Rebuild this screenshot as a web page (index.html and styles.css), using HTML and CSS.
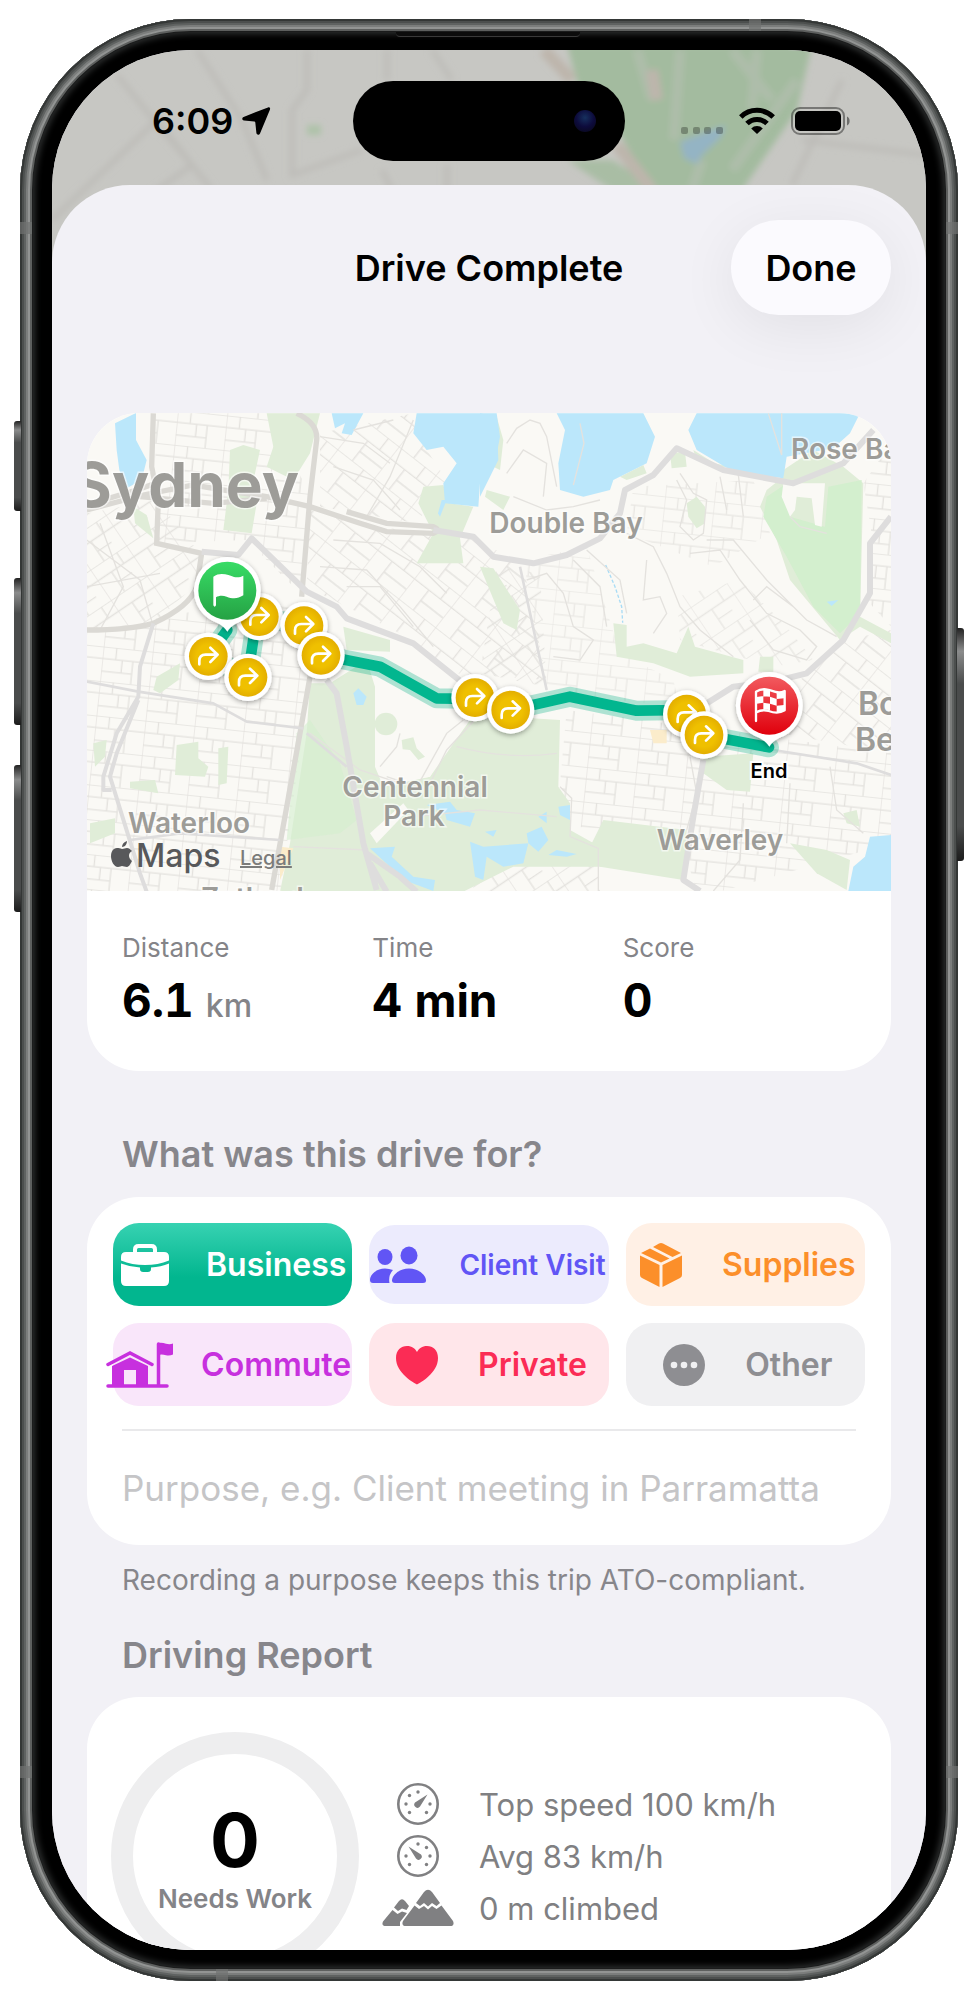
FILE: index.html
```html
<!DOCTYPE html>
<html lang="en">
<head>
	<meta charset="utf-8">
	<meta name="viewport" content="width=device-width, initial-scale=1">
	<title>Drive Complete</title>
	<link rel="stylesheet" href="styles.css">
</head>
<body>
<div class="phone">
	<!-- hardware details -->
	<span class="key key-action"></span>
	<span class="key key-up"></span>
	<span class="key key-down"></span>
	<span class="key key-power"></span>
	<span class="band band-left"></span>
	<span class="band band-right"></span>
	<span class="band band-left band-low"></span>
	<span class="band band-right band-low"></span>
	<span class="band band-top"></span>
	<span class="band band-bottom"></span>
	<span class="speaker"></span>

	<div class="screen">
		<!-- dimmed map behind the sheet -->
		<svg class="backdrop" viewBox="0 0 874 240" preserveAspectRatio="none" aria-hidden="true">
			<defs>
				<filter id="soft"><feGaussianBlur stdDeviation="3"/></filter>
			</defs>
			<rect width="874" height="240" fill="#c7c7c3"/>
			<g filter="url(#soft)">
				<path d="M515 -5H760L745 60L690 140H600L560 70L530 50Z" fill="#a3bb9f"/>
				<path d="M560 110L610 140H560L515 110Z" fill="#a9bda4"/>
				<path d="M585 0L600 50M628 0L622 90M705 0L700 60M650 110L640 140M745 30L680 120M680 0L720 50" stroke="#aebdaa" stroke-width="10" fill="none"/>
				<path d="M492 0L520 30M565 95L600 140M600 20L605 50" stroke="#bdb5ac" stroke-width="12" fill="none"/>
				<path d="M628 92L674 75L668 88L650 105L645 114L632 108Z" fill="#94b4c4"/>
				<path d="M145 0L190 70L215 130M65 25L110 80L140 115L160 140M140 115L0 215M255 0V40L240 60V125L310 100M140 115L105 70L0 170M335 0V30M380 0L400 30M330 120L340 140M395 115V140M790 30L740 135M750 90L874 105" stroke="#bdbcb8" stroke-width="5" fill="none"/>
				<path d="M255 75h14v10h-14z" fill="#adc2a8"/>
			</g>
		</svg>

		<div class="status-bar">
			<div class="status-left">
				<span class="clock">6:09</span>
				<svg width="30" height="30" viewBox="0 0 30 30" aria-hidden="true">
					<path d="M27 1.400c1.400-.500 2.500.500 2 2L19 27.500c-.8 1.800-3.200 1.700-3.600-.4L14.300 16.500c-.1-.6-.4-.9-1-1L3 14.500c-2.100-.3-2.300-2.800-.4-3.600z" fill="#000"/>
				</svg>
			</div>
			<div class="island"><span class="camera"></span></div>
			<div class="status-right">
				<svg width="42" height="8" viewBox="0 0 42 8" fill="#000" fill-opacity=".28" aria-hidden="true">
					<rect width="7" height="7" rx="2"/><rect x="12" width="7" height="7" rx="2"/><rect x="23" width="7" height="7" rx="2"/><rect x="35" width="7" height="7" rx="2"/>
				</svg>
				<svg width="36" height="27" viewBox="0 0 36 27" aria-hidden="true">
					<g fill="none" stroke="#000" stroke-width="5">
						<path d="M1.800 10a23 23 0 0 1 32.400 0"/>
						<path d="M8 16.600a14.200 14.200 0 0 1 20 0"/>
					</g>
					<path d="M18 27l-5.800-5.600a8.200 8.200 0 0 1 11.600 0z"/>
				</svg>
				<svg width="60" height="28" viewBox="0 0 60 28" aria-hidden="true">
					<rect x="1" y="1" width="52" height="26" rx="8" fill="none" stroke="#000" stroke-opacity=".4" stroke-width="2"/>
					<rect x="4" y="4" width="46" height="20" rx="5"/>
					<path d="M56 9.500c3.500 1.500 3.500 7.500 0 9z" fill-opacity=".45"/>
				</svg>
			</div>
		</div>

		<main class="sheet">
			<header class="sheet-header">
				<h1>Drive Complete</h1>
				<button class="done" type="button">Done</button>
			</header>

			<!-- route map and trip numbers -->
			<section class="card trip">
				<svg class="map" viewBox="0 0 804 478" role="img" aria-label="Route map">
					<defs>
						<pattern id="gridA" width="148" height="104" patternUnits="userSpaceOnUse" patternTransform="rotate(6)">
							<path d="M0 0H148M0 0V104M40 0V36M0 36H148M92 36V104M0 74H92M60 36V74" class="street"/>
						</pattern>
						<pattern id="gridB" width="130" height="110" patternUnits="userSpaceOnUse" patternTransform="rotate(-34)">
							<path d="M0 0H130M0 0V110M50 40V110M0 40H130M50 76H100M95 0V40" class="street"/>
						</pattern>
						<pattern id="gridC" width="140" height="120" patternUnits="userSpaceOnUse" patternTransform="rotate(38)">
							<path d="M0 0H140M0 0V120M56 45V120M0 45H140M100 0V45M56 85H140" class="street"/>
						</pattern>
						<linearGradient id="green" x1="0" y1="0" x2="0" y2="1">
							<stop offset="0" stop-color="#38dc66"/><stop offset="1" stop-color="#25a244"/>
						</linearGradient>
						<linearGradient id="red" x1="0" y1="0" x2="0" y2="1">
							<stop offset="0" stop-color="#f25a5f"/><stop offset="1" stop-color="#e0000c"/>
						</linearGradient>
						<radialGradient id="gold">
							<stop offset=".6" stop-color="#efc000"/><stop offset="1" stop-color="#e3ae00"/>
						</radialGradient>
						<filter id="shade" x="-40%" y="-40%" width="180%" height="180%">
							<feDropShadow dx="0" dy="5" stdDeviation="8" flood-opacity=".35"/>
						</filter>
						<g id="turn">
							<circle r="71" fill="#fff" filter="url(#shade)"/>
							<circle r="58" fill="url(#gold)"/>
							<path d="M-27 24V14C-27 2-20-5-8-5H27M6-26L28-5L6 17" fill="none" stroke="#fff" stroke-width="8" stroke-linecap="round" stroke-linejoin="round"/>
						</g>
						<path id="balloon" d="M0-101A101 101 0 0 1 45 90C25 98 12 104 0 123C-12 104-25 98-45 90A101 101 0 0 1 0-101Z"/>
					</defs>

					<rect width="804" height="478" fill="#faf9f5"/>
					<g transform="translate(-7 -13) scale(.33333333)">
						<!-- street texture -->
						<path d="M20 340L230 300L360 460L340 560L210 680L20 690Z" fill="url(#gridB)"/>
						<path d="M220 40H560L700 300L660 580L500 420L240 430Z" fill="url(#gridA)"/>
						<path d="M720 100L1000 40L1040 150L1100 240L1010 370L720 320Z" fill="url(#gridC)"/>
						<path d="M690 330L1000 400L1200 420L1330 500L1400 840L1120 820L1000 720L680 560Z" fill="url(#gridC)"/>
						<path d="M20 700L300 640L680 600L690 840L600 1480H20Z" fill="url(#gridA)"/>
						<path d="M1250 500L1380 520L1400 860L1200 820Z" fill="url(#gridB)"/>
						<path d="M1460 930L2433 1060V1330L1900 1480H1850L1800 1300L1480 1280L1440 1150Z" fill="url(#gridA)"/>
						<path d="M1330 480L1520 440L1620 760L1780 840L1800 920L1400 880Z" fill="url(#gridA)" opacity=".7"/>
						<path d="M1790 590L1980 540L2120 680L2200 780L2080 800L1800 720Z" fill="url(#gridB)" opacity=".8"/>
						<path d="M2300 720L2433 690V1060L2100 1000L2160 840Z" fill="url(#gridC)"/>
						<path d="M2350 250L2433 130V680L2360 600L2380 430Z" fill="url(#gridA)"/>
						<path d="M1660 260L2020 240L2070 400L1900 500L1640 400Z" fill="url(#gridA)" opacity=".8"/>
						<path d="M1180 1400L1560 1390L1560 1480H1180Z" fill="url(#gridB)"/>

						<!-- parks -->
						<g fill="#e0edd8">
							<path d="M560 40H720L690 160L640 240L560 200L580 140Z"/>
							<path d="M450 150L490 135L540 150L510 290L530 310L515 400L430 390L445 270Z"/>
							<path d="M160 320L200 345L220 415L165 370Z"/>
							<path d="M1030 260L1090 255L1110 310L1180 320L1140 415L1150 490L1010 490L1060 400L1015 310Z"/>
							<path d="M690 850L750 850L860 780L885 860V1100L910 1160L1050 1130L1170 960L1280 950L1440 960L1435 1160L1470 1210V1290L1560 1340L1570 1400L1300 1400L1150 1475H600L630 1330L680 1000Z"/>
							<path d="M1570 1260L1820 1290L1810 1440L1560 1400L1530 1340Z"/>
							<path d="M790 680L930 720L930 755L800 750Z"/>
							<path d="M290 1035L355 1025V1075L385 1100L375 1130L285 1125Z"/>
							<path d="M415 1045L445 1040L440 1150L415 1155Z"/>
							<path d="M150 1145L225 1140L235 1180L150 1165ZM220 870L230 830L300 790L295 840L240 880Z"/>
							<path d="M30 1270L105 1255V1300L30 1330ZM40 1030L80 1020L75 1070L45 1100Z"/>
							<path d="M1600 670L1640 675V740L1690 730L1790 760L1825 680L1845 740L1990 780V820L1830 830L1720 790L1610 770Z"/>
							<path d="M1820 310L1850 290L1875 320V370L1850 385L1825 350Z"/>
							<path d="M1200 500L1240 505L1320 630L1310 690L1270 670Z"/>
							<path d="M1220 270L1290 290L1270 330L1215 290ZM1620 230L1690 195L1700 220L1640 240Z"/>
							<path d="M1870 1070L2020 1060L2010 1175L1940 1170L1870 1120Z"/>
							<path d="M2130 1330L2240 1350L2310 1380L2300 1470L2210 1420Z"/>
							<path d="M2040 770H2080V815H2035ZM1770 160L1815 155L1820 200L1775 205Z"/>
							<path d="M1820 90L1840 150L1920 200L2110 210L2200 150L2290 200L2350 250L2340 650L2433 700V730L2340 680L2280 720L2130 540L2090 420L2040 320L2060 270L2110 230L1850 180Z"/>
							<path d="M1250 50L1270 120L1260 210L1240 200Z"/>
							<path d="M2290 1240L2330 1230L2340 1280L2300 1270ZM960 1020L1000 1015L1035 1070L1000 1060Z"/>
						</g>
						<g fill="#d3efce">
							<path d="M2060 290L2120 250L2130 350L2235 380L2245 260L2345 240L2340 640L2280 700L2200 620L2120 470L2050 350Z"/>
							<path d="M650 1000L690 960L780 1090L830 1260L780 1300L620 1320Z" opacity=".6"/>
						</g>
						<!-- clearings inside the parks -->
						<path d="M2110 250L2235 250L2225 380L2205 375L2195 295L2150 290L2145 330L2130 350L2105 290Z" fill="#faf9f5"/>
						<path d="M885 900L960 840L1060 900L1150 960L1050 1130L930 1150L890 1080Z" fill="#faf9f5"/>
						<path d="M870 1300L970 1210L985 1230L890 1330Z" fill="#faf9f5"/>
						<circle cx="918" cy="972" r="34" fill="#e0edd8"/>
						<path d="M965 1020L1000 1012L1010 1045L1035 1070L1015 1080L990 1050L968 1048Z" fill="#e0edd8"/>
						<path d="M1710 990H1760V1030H1720ZM600 1340L640 1345L600 1440Z" fill="#fbeccb"/>

						<!-- water -->
						<g fill="#bbe7fb">
							<path d="M105 70L168 39V120L200 180L185 240L140 265L118 210L110 150Z"/>
							<path d="M755 40H850L815 105L785 100L795 70L765 85Z"/>
							<path d="M1010 40H1250L1260 110L1245 190L1200 250L1195 320L1095 310L1090 250L1130 190L1090 140L1040 150L1000 100Z"/>
							<path d="M1100 300L1080 350L1074 340L1085 300Z"/>
							<path d="M1430 40H1690L1725 110L1700 190L1600 240L1590 270L1510 290L1440 270L1435 190L1455 90Z"/>
							<path d="M1850 40H2340L2310 100L2260 145L2120 170L2110 235L1960 215L1850 150L1825 90Z"/>
							<path d="M1200 40L1250 50L1255 180L1200 290Z"/>
							<path d="M820 880L835 865L860 890L850 915L830 915Z"/>
							<path d="M870 1345L945 1340L935 1370L1000 1430L1065 1440L1060 1473L985 1445L930 1400Z"/>
							<path d="M1040 1215L1110 1205L1130 1230L1185 1240L1170 1280L1100 1260L1095 1240Z"/>
							<path d="M1170 1325L1210 1340L1345 1330L1330 1390L1270 1400L1220 1370L1210 1440L1185 1430Z"/>
							<path d="M1340 1300L1385 1280L1405 1320L1375 1355L1345 1330ZM1375 1250L1400 1235V1270ZM1435 1220L1470 1215V1260L1440 1245ZM1215 1295L1250 1290L1240 1310ZM1405 1365L1430 1350L1490 1362L1460 1370Z"/>
							<path d="M2433 1305L2370 1310L2355 1370L2320 1400L2305 1473H2433Z"/>
							<path d="M2240 605L2275 600L2255 618Z"/>
						</g>
						<path d="M1500 70L1512 130L1480 255M2065 40L2105 165V40" class="street"/>
						<path d="M1577 495L1605 560L1625 620L1628 668" fill="none" stroke="#a9dcf5" stroke-width="4" stroke-dasharray="10 6"/>

						<!-- winding side streets -->
						<g class="street">
							<path d="M1280 130L1310 85L1350 60L1380 70L1400 110L1430 260M1300 290L1400 330L1480 320L1560 300M1280 220L1330 150L1400 190L1390 290"/>
							<path d="M1340 540L1400 520L1450 580L1480 680L1540 720L1500 780L1420 770M1480 480L1560 560L1580 680M1520 450L1620 540L1640 640"/>
							<path d="M1800 220L1840 280L1880 300L1870 400L1840 420L1800 380L1820 300L1790 240"/>
							<path d="M1640 400L1720 440L1760 520L1800 620L1860 690L1960 770M1830 460L1920 450L1980 540L2060 640L2160 690L2210 740L2180 780L2080 750L2010 660"/>
							<path d="M1700 480L1690 600L1740 590L1760 640L1720 700M1880 420L1960 420L2060 540L2180 660L2270 710M2020 600L2060 560L2140 620"/>
							<path d="M2130 350L2160 380L2240 400M1920 230L1940 330M1975 225L1990 350"/>
							<path d="M900 1100L950 1040L960 1000M920 1130L1040 1170L1100 1050L1240 900M1000 1180L1100 1000L1150 960"/>
							<path d="M1130 1040Q1280 1080 1430 1060M1000 1250L1200 1230L1430 1250M640 1340L860 1350M690 1000L840 1110L960 1150"/>
							<path d="M1440 1160L1475 1195L1470 1310L1555 1345V1473M1820 1290L1850 1180L1830 1070"/>
							<path d="M720 110L850 130L930 190M760 200L880 240L960 330M820 90L940 60M1000 60L930 230L860 350"/>
							<path d="M760 420L900 430L1020 500L1100 580M720 500L860 510L960 620L1060 740M800 560L900 560L1000 680"/>
							<path d="M20 420L180 540L220 680M60 370L130 560L60 690M20 560L240 520"/>
							<path d="M2250 1100L2270 1230L2350 1300M2130 1150L2120 1330M1990 1210L1980 1380L1900 1473"/>
						</g>

						<!-- main roads -->
						<g class="road">
							<path d="M20 330L190 285L340 255L460 275L560 290L690 320L840 370L920 395L1060 400Q1085 390 1060 380L920 370L800 335"/>
							<path d="M20 315L170 270L240 245M180 290L400 310L560 295"/>
							<path d="M220 40L215 200L235 300L230 430L365 460L350 560Q330 620 220 670Q150 690 20 690"/>
							<path d="M650 40Q715 70 710 120L690 290L665 590"/>
							<path d="M690 830L660 1000L575 1470"/>
						</g>
						<g class="avenue">
							<path d="M365 455L475 465L515 415L680 575L770 620L800 655L1000 730L1150 850"/>
							<path d="M1060 390L1180 410L1240 470L1360 490L1460 465L1560 415L1620 340L1635 270L1720 225L1790 145L1930 210L2140 250L2290 190L2380 90"/>
							<path d="M2433 350L2370 430V580L2290 720L2180 820L2080 845L1960 860L1880 910"/>
							<path d="M740 840L770 880L800 1040L850 1330L890 1470M860 1360L960 1430L1010 1475M870 1390L920 1475"/>
							<path d="M1870 1080L1840 1250L1810 1440L1860 1473"/>
							<path d="M220 670L180 800L175 890L110 1000L70 1130V1170H95M175 900L110 1060L90 1130L180 1420L200 1475" stroke-width="12"/>
							<path class="minor" d="M20 845L175 875L400 910L500 965L670 985M1320 500L1400 870M2080 1050L2330 1090L2433 1125M150 1320L300 1300L600 1320M680 1000L800 1100"/>
						</g>

						<!-- route -->
						<g fill="none" stroke-linejoin="round" stroke-linecap="round">
							<path d="M442 690L385 768L503 832L530 650L672 675L722 765L900 800L1070 895L1185 897L1292 930L1470 890L1670 932L1820 930L1872 1005L2067 1042" stroke="#10b18a" stroke-opacity=".32" stroke-width="60"/>
							<path d="M442 690L385 768L503 832L530 650L672 675L722 765L900 800L1070 895L1185 897L1292 930L1470 890L1670 932L1820 930L1872 1005L2067 1042" stroke="#02b68f" stroke-width="32"/>
						</g>
						<use href="#turn" x="538" y="650"/>
						<use href="#turn" x="672" y="677"/>
						<use href="#turn" x="723" y="766"/>
						<use href="#turn" x="385" y="769"/>
						<use href="#turn" x="504" y="832"/>
						<use href="#turn" x="1185" y="893"/>
						<use href="#turn" x="1292" y="930"/>
						<use href="#turn" x="1820" y="942"/>
						<use href="#turn" x="1872" y="1005"/>
						<g transform="translate(442 572)">
							<use href="#balloon" fill="#fff" filter="url(#shade)"/>
							<circle r="87" fill="url(#green)"/>
							<path d="M-42 -42C-20 -58 5 -46 20 -41C32 -38 42 -42 48 -45V14C30 26 14 24 -2 18C-14 14 -26 15 -34 20V44Q-38 52 -42 44Z" fill="#fff"/>
						</g>
						<g transform="translate(2068 917)">
							<use href="#balloon" fill="#fff" filter="url(#shade)"/>
							<circle r="87" fill="url(#red)"/>
							<path d="M-40 46V-42C-18 -56 5 -46 20 -41C32 -38 40 -41 46 -44V14C30 24 14 22 -2 16C-14 12 -28 14 -40 20" fill="none" stroke="#fff" stroke-width="7" stroke-linecap="round" stroke-linejoin="round"/>
							<path d="M-18 -48l20 1v20l-20-1zM22 -40l22-2v20l-22 2zM-38 -26l20-3v20l-20 3zM2 -27l20 7v20l-20-6zM-18 -9l20 3v20l-20-4zM22 0l22-2v18l-22 4z" fill="#fff"/>
						</g>
					</g>

					<!-- labels -->
					<g class="map-labels">
						<text class="city" x="212" y="94" text-anchor="end">Sydney</text>
						<text x="479" y="120" text-anchor="middle">Double Bay</text>
						<text x="704" y="46">Rose Bay</text>
						<text x="328" y="384" text-anchor="middle">Centennial</text>
						<text x="327" y="413" text-anchor="middle">Park</text>
						<text x="102" y="420" text-anchor="middle">Waterloo</text>
						<text x="633" y="437" text-anchor="middle">Waverley</text>
						<text x="114" y="495">Zetland</text>
						<text class="suburb" x="771" y="302">Bondi</text>
						<text class="suburb" x="768" y="338">Beach</text>
					</g>
					<text class="end" x="682" y="365" text-anchor="middle">End</text>
					<path d="M35 436c-2-1-3-1-5-1-4 0-6 4-6 8 0 5 3 11 7 11 2 0 3-1 4-1s3 1 5 1c2 0 4-4 5-6-4-3-4-8 0-10-2-2-3-3-5-3s-3 1-5 1zM35 434c0-3 2-5 5-6 0 3-2 6-5 6z" class="attribution"/>
					<text class="attribution brand" x="49" y="454">Maps</text>
					<a href="#legal"><text class="attribution legal" x="153" y="452">Legal</text></a>
				</svg>
				<dl class="stats">
					<div><dt>Distance</dt><dd>6.1<small>km</small></dd></div>
					<div><dt>Time</dt><dd>4 min</dd></div>
					<div><dt>Score</dt><dd>0</dd></div>
				</dl>
			</section>

			<!-- trip category -->
			<h2 id="category-title">What was this drive for?</h2>
			<section class="card purpose" aria-labelledby="category-title">
				<div class="categories">
					<button class="category business" type="button">
						<span class="icon"><svg width="50" height="42" viewBox="0 0 50 42" fill="currentColor">
							<path d="M15 9V5.500Q15 2 18.500 2h13Q35 2 35 5.500V9" fill="none" stroke="currentColor" stroke-width="4"/>
							<path d="M6 8h38q5 0 5 5v3.500Q38 21 25 21T1 16.500V13q0-5 5-5z"/>
							<path d="M1 19.500Q10 23 20 23.500V25q0 3 3 3h5q3 0 3-3v-1.500Q41 23 49 19.500V37q0 5-5 5H6q-5 0-5-5z"/>
						</svg></span>
						Business
					</button>
					<button class="category client" type="button">
						<span class="icon"><svg width="58" height="38" viewBox="0 0 58 38" fill="currentColor">
							<ellipse cx="16" cy="11" rx="7.500" ry="8"/>
							<ellipse cx="40" cy="9.500" rx="8.500" ry="9"/>
							<path d="M24 24Q20 22.500 16 22.500C7 22.500 1 29 1 34Q1 37 4 37H20.500Q19 29.500 24 24Z"/>
							<path d="M40 22.500c10 0 17 7 17 12q0 2.500-3 2.500H26q-3 0-3-2.500c0-5 7-12 17-12z"/>
						</svg></span>
						Client Visit
					</button>
					<button class="category supplies" type="button">
						<span class="icon"><svg width="44" height="46" viewBox="0 0 44 46" fill="currentColor">
							<path d="M1 13.500L20.500 23V45L3 36Q1 35 1 33ZM43 13.500L23.500 23V45L41 36Q43 35 43 33Z"/>
							<path d="M2 11L11 6.500L30.500 16.500L22 20.500ZM14 5L20 1.500Q22 .5 24 1.500L42 11L33.500 15Z"/>
						</svg></span>
						Supplies
					</button>
					<button class="category commute" type="button">
						<span class="icon"><svg width="68" height="46" viewBox="0 0 68 46" fill="currentColor">
							<path d="M2 22.500L24 11L46 22.500" fill="none" stroke="currentColor" stroke-width="3.500" stroke-linecap="round"/>
							<path d="M6 24L24 15.500L42 24V43H30V28H18V43H6Z"/>
							<path d="M2 44H61M52.500 2V43" fill="none" stroke="currentColor" stroke-width="3.500" stroke-linecap="round"/>
							<path d="M52 1q4-1 8 .8 4 1 7-.3v11q-3 1.500-7 .8-4-1.300-8-.3z"/>
						</svg></span>
						Commute
					</button>
					<button class="category private" type="button">
						<span class="icon"><svg width="42" height="40" viewBox="0 0 42 40" fill="currentColor">
							<path d="M21 39.500C18 38 0 28 0 13C0 5 5 1 11 1C16 1 19 3.500 21 7C23 3.500 26 1 31 1C37 1 42 5 42 13C42 28 24 38 21 39.500Z"/>
						</svg></span>
						Private
					</button>
					<button class="category other" type="button">
						<span class="icon"><svg width="42" height="42" viewBox="0 0 42 42">
							<circle cx="21" cy="21" r="21" fill="currentColor"/>
							<g fill="#f0f0f2"><circle cx="11" cy="21" r="3.300"/><circle cx="21" cy="21" r="3.300"/><circle cx="31" cy="21" r="3.300"/></g>
						</svg></span>
						Other
					</button>
				</div>
				<input class="purpose-input" type="text" aria-label="Purpose" placeholder="Purpose, e.g. Client meeting in Parramatta">
			</section>
			<p class="hint">Recording a purpose keeps this trip ATO-compliant.</p>

			<!-- report -->
			<h2 class="report-title">Driving Report</h2>
			<section class="card report">
				<div class="score">
					<strong>0</strong>
					<span>Needs Work</span>
				</div>
				<ul class="facts">
					<li>
						<span class="icon"><svg width="42" height="42" viewBox="0 0 42 42" fill="currentColor">
							<circle cx="21" cy="21" r="19.700" fill="none" stroke="currentColor" stroke-width="2.600"/>
							<circle cx="9" cy="21" r="1.700"/><circle cx="12.500" cy="12.500" r="1.700"/><circle cx="21" cy="9" r="1.700"/><circle cx="33" cy="21" r="1.700"/><circle cx="12.500" cy="29.500" r="1.700"/><circle cx="29.500" cy="29.500" r="1.700"/>
							<path d="M30.500 11.500L23 23.500A3.200 3.200 0 1 1 18 19.500Z"/>
						</svg></span>
						Top speed 100 km/h
					</li>
					<li>
						<span class="icon"><svg width="42" height="42" viewBox="0 0 42 42" fill="currentColor">
							<circle cx="21" cy="21" r="19.700" fill="none" stroke="currentColor" stroke-width="2.600"/>
							<circle cx="9" cy="21" r="1.700"/><circle cx="29.500" cy="12.500" r="1.700"/><circle cx="21" cy="9" r="1.700"/><circle cx="33" cy="21" r="1.700"/><circle cx="12.500" cy="29.500" r="1.700"/><circle cx="29.500" cy="29.500" r="1.700"/>
							<path d="M11.500 11.500L24 19.500A3.200 3.200 0 1 1 19 23.500Z"/>
						</svg></span>
						Avg 83 km/h
					</li>
					<li>
						<span class="icon"><svg width="72" height="38" viewBox="0 0 72 38" fill="currentColor">
							<path d="M34 14L42 3Q46-1.500 50 3L58 14L54.500 17L50 14L46 17.500L42 14L38 17Z"/>
							<path d="M32.500 16.500L37 20L42 17L46 20.500L50 17L54.500 20L59.500 16.500L71 32Q73 37 68 37H24Q19 37 21 32Z"/>
							<path d="M12 18.500L17 12Q20 8.500 23 12L27 17L24.500 21L20 19.500L16 22Z"/>
							<path d="M10.500 21L15.500 25L20 22.500L25 24L18 33V37H4Q-1 37 1 32.500Z"/>
						</svg></span>
						0 m climbed
					</li>
				</ul>
			</section>
		</main>
	</div>
</div>
</body>
</html>
```
FILE: styles.css
```css
* {
	box-sizing: border-box;
}

body {
	margin: 0;
	height: 100vh;
	padding: 19px 20px;
	background: #fff;
	color: #000;
	font-family: Inter, "Liberation Sans", sans-serif;
}

h1, h2, p, dl, dd, ul {
	margin: 0;
	padding: 0;
}

button, input {
	font-family: inherit;
	border: 0;
}

/* phone body */
.phone {
	position: relative;
	height: 100%;
	padding: 31px 32px;
	border-radius: 171px;
	background: #000;
	box-shadow:
		inset 0 0 0 2px #343736,
		inset 0 0 0 4px #4c4f4e,
		inset 0 0 0 6px #5f6261,
		inset 0 0 0 8px #7b7d7c,
		inset 0 0 0 10px #929493,
		inset 0 0 0 12px #5d5f5e,
		inset 0 0 0 13px #1b1c1c,
		inset 0 0 6px 15px #2e3030;
}

.key {
	position: absolute;
	left: -6px;
	width: 7px;
	border-radius: 3px 0 0 3px;
	background: linear-gradient(#222, #8b8c8c 10%, #4a4c4c 24%, #4a4c4c 85%, #1c1c1c);
}

.key-action {
	top: 402px;
	height: 90px;
}

.key-up {
	top: 559px;
	height: 147px;
}

.key-down {
	top: 746px;
	height: 147px;
}

.key-power {
	top: 609px;
	left: auto;
	right: -6px;
	height: 233px;
	border-radius: 0 3px 3px 0;
}

.band {
	position: absolute;
	width: 12px;
	height: 12px;
	background: rgba(112, 114, 113, 0.7);
}

.band-left {
	left: 0;
	top: 203px;
}

.band-right {
	right: 0;
	top: 203px;
}

.band-low {
	top: auto;
	bottom: 203px;
}

.band-top {
	top: 0;
	right: 197px;
}

.band-bottom {
	bottom: 0;
	left: 196px;
}

.speaker {
	position: absolute;
	top: 13px;
	left: 50%;
	width: 184px;
	height: 5px;
	margin-left: -93px;
	border-bottom: 1px solid #3a3a3a;
	border-radius: 0 0 4px 4px;
	background: #0c0c0c;
}

.screen {
	position: relative;
	height: 100%;
	overflow: hidden;
	border-radius: 139px;
	background: #f2f1f6;
}

.backdrop {
	position: absolute;
	top: 0;
	left: 0;
	width: 100%;
	height: 240px;
}

/* status bar */
.status-bar {
	position: relative;
	display: grid;
	grid-template-columns: 1fr 272px 1fr;
	align-items: center;
	height: 135px;
	padding-top: 6px;
}

.status-left {
	display: flex;
	align-items: center;
	gap: 8px;
	padding-left: 100px;
}

.clock {
	font-size: 36px;
	font-weight: 600;
}

.island {
	display: flex;
	align-items: center;
	justify-content: flex-end;
	height: 80px;
	padding-right: 29px;
	border-radius: 40px;
	background: #000;
}

.camera {
	width: 22px;
	height: 22px;
	border-radius: 50%;
	background: radial-gradient(circle at 50% 35%, #16305e, #0d0b3c 50%, #080814);
}

.status-right {
	display: flex;
	align-items: center;
	justify-content: flex-end;
	gap: 16px;
	padding-right: 75px;
}

.status-right svg:first-child {
	align-self: flex-end;
}

/* sheet */
.sheet {
	position: relative;
	height: 100%;
	padding: 35px;
	border-radius: 78px 78px 0 0;
	background: #f2f1f6;
}

.sheet-header {
	display: grid;
	grid-template-columns: 1fr auto 1fr;
	align-items: center;
	margin-bottom: 98px;
}

.sheet-header h1 {
	grid-column: 2;
	font-size: 36px;
	font-weight: 600;
}

.done {
	justify-self: end;
	width: 160px;
	height: 95px;
	border-radius: 48px;
	background: #fbfafe;
	box-shadow: 0 12px 60px rgba(0, 0, 0, 0.07);
	color: #000;
	font-size: 36px;
	font-weight: 600;
}

.card {
	border-radius: 52px;
	background: #fff;
}

h2 {
	padding: 0 35px;
	color: #87868b;
	font-size: 36px;
	font-weight: 600;
	line-height: 44px;
}

/* map */
.trip {
	overflow: hidden;
	margin-bottom: 61px;
}

.map {
	display: block;
	width: 100%;
	height: auto;
}

.street {
	fill: none;
	stroke: #e4e2de;
	stroke-width: 4;
}

.road {
	fill: none;
	stroke: #dbd9d4;
	stroke-width: 16;
}

.avenue {
	fill: none;
	stroke: #dedddd;
	stroke-width: 18;
	stroke-linejoin: round;
}

.avenue .minor {
	stroke-width: 8;
}

.map-labels {
	fill: #9d9c98;
	font-size: 28px;
	font-weight: 600;
	paint-order: stroke;
	stroke: rgba(255, 255, 255, 0.6);
	stroke-width: 3px;
}

.map-labels .city {
	font-size: 62px;
	font-weight: 700;
}

.map-labels .suburb {
	font-size: 32px;
}

.end {
	font-size: 20px;
	font-weight: 600;
	paint-order: stroke;
	stroke: #fff;
	stroke-width: 4px;
}

.attribution {
	fill: #58595b;
}

.brand {
	font-size: 32px;
	font-weight: 500;
}

.legal {
	fill: #7b7b7a;
	font-size: 20px;
	font-weight: 500;
	text-decoration: underline;
}

/* trip numbers */
.stats {
	display: grid;
	grid-template-columns: repeat(3, 1fr);
	gap: 17px;
	padding: 41px 35px;
}

.stats dt {
	color: #848488;
	font-size: 26px;
	line-height: 32px;
}

.stats dd {
	margin-top: 6px;
	font-size: 46px;
	font-weight: 700;
	line-height: 60px;
	font-variant-numeric: tabular-nums;
}

.stats small {
	margin-left: 12px;
	color: #848488;
	font-size: 32px;
	font-weight: 500;
	line-height: 32px;
}

/* category buttons */
.purpose {
	margin-top: 21px;
	padding: 26px 26px 0;
}

.categories {
	display: grid;
	grid-template-columns: repeat(3, 1fr);
	align-items: center;
	gap: 17px;
	margin-bottom: 23px;
}

.category {
	display: flex;
	align-items: center;
	justify-content: center;
	gap: 36px;
	height: 83px;
	padding: 0;
	border-radius: 26px;
	font-size: 32px;
	font-weight: 600;
	white-space: nowrap;
}

.icon {
	display: flex;
	flex: 0 0 51px;
	justify-content: center;
	width: 51px;
}

.icon svg {
	flex: none;
}

.business {
	background: linear-gradient(#37d2b2, #02b68f 65%);
	color: #fff;
}

.client {
	height: 79px;
	background: #ecebfd;
	color: #6155f5;
	font-size: 28px;
}

.supplies {
	background: #fff0e5;
	color: #fc8f2a;
}

.commute {
	background: #f9e6fa;
	color: #c730de;
}

.private {
	background: #ffe6ea;
	color: #fb2c55;
}

.other {
	background: #f0f0f2;
	color: #8e8e92;
}

.purpose-input {
	display: block;
	width: calc(100% - 18px);
	height: 116px;
	margin: 0 9px;
	padding: 0;
	border-top: 2px solid #e9e9eb;
	background: none;
	font-size: 35px;
}

.purpose-input::placeholder {
	color: #c5c5c7;
}

.hint {
	padding: 0 35px;
	margin-top: 18px;
	color: #87868b;
	font-size: 28px;
	line-height: 34px;
}

.report-title {
	margin-top: 36px;
}

/* report */
.report {
	display: flex;
	align-items: center;
	gap: 33px;
	margin-top: 20px;
	padding: 35px 24px;
}

.score {
	display: flex;
	flex-direction: column;
	align-items: center;
	justify-content: center;
	width: 248px;
	height: 248px;
	padding-top: 4px;
	border: 22px solid #eeeeef;
	border-radius: 50%;
}

.score strong {
	font-size: 74px;
	line-height: 78px;
}

.score span {
	margin-top: 4px;
	color: #848488;
	font-size: 26px;
	font-weight: 600;
	line-height: 32px;
}

.facts {
	list-style: none;
}

.facts li {
	display: flex;
	align-items: center;
	gap: 36px;
	height: 52px;
	color: #808082;
	font-size: 31px;
}
```
